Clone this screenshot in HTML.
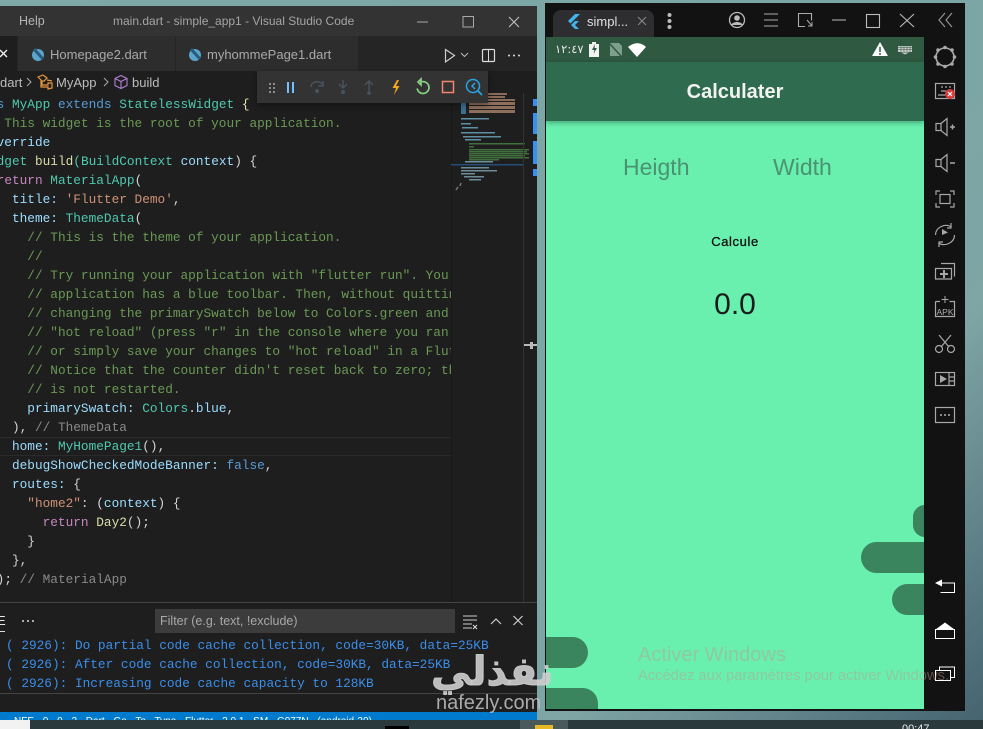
<!DOCTYPE html>
<html><head><meta charset="utf-8"><style>
html,body{margin:0;padding:0;width:983px;height:729px;overflow:hidden;background:#2a3a3c}
*{box-sizing:border-box}
.a{position:absolute}
#root{position:absolute;left:0;top:0;width:983px;height:729px;overflow:hidden;contain:paint}
#bg{left:0;top:0;width:983px;height:729px;background:linear-gradient(135deg,#7fa8a8 0%,#7ba6a5 55%,#7fa5a5 75%,#44626f 100%)}
.ui{font-family:"Liberation Sans",sans-serif;white-space:nowrap}
#code{left:-34px;top:95px;width:485px;font:12.78px/19px "Liberation Mono",monospace;white-space:pre;color:#d4d4d4}
#clip{left:0;top:0;width:451px;height:603px;overflow:hidden}
.k{color:#569cd6}.t{color:#4ec9b0}.c{color:#6a9955}.v{color:#9cdcfe}.f{color:#dcdcaa}.s{color:#ce9178}.p{color:#c586c0}.y{color:#e8e2b0}.o{color:#d4d4d4}.b{color:#4ec9b0}
.log{left:6px;font:12.78px/19px "Liberation Mono",monospace;color:#3b8eea;white-space:pre}
svg{position:absolute;overflow:visible}
</style></head><body><div id="root">
<div class="a" id="bg"></div>

<!-- VS Code window -->
<div class="a" style="left:0;top:6px;width:537px;height:706px;background:#1e1e1e"></div>
<div class="a" style="left:0;top:6px;width:537px;height:30px;background:#333"></div>
<div class="a ui" style="left:19px;top:14px;font-size:12.5px;color:#b5b5b5">Help</div>
<div class="a ui" style="left:113px;top:14px;font-size:12px;color:#a5a5a5">main.dart - simple_app1 - Visual Studio Code</div>
<svg style="left:0;top:0" width="537" height="36"><path d="M417 22h11" stroke="#aaa" stroke-width="1"/><rect x="463" y="16.500" width="10.500" height="10.500" fill="none" stroke="#aaa"/><path d="M509 17l10 10M519 17l-10 10" stroke="#bbb" stroke-width="1.200"/></svg>
<div class="a" style="left:0;top:36px;width:537px;height:35px;background:#252526"></div>
<div class="a" style="left:0;top:36px;width:17px;height:35px;background:#1e1e1e"></div>
<div class="a" style="left:18px;top:36px;width:157px;height:35px;background:#2d2d2d"></div>
<div class="a" style="left:176px;top:36px;width:182px;height:35px;background:#2d2d2d"></div>
<svg style="left:0;top:36px" width="400" height="35"><path d="M0 14l7 7M7 14l-7 7" stroke="#eee" stroke-width="1.400"/>
<circle cx="38" cy="19" r="6" fill="#5aa5cc"/><path d="M34 13l9 10" stroke="#2a5a7a" stroke-width="3"/>
<circle cx="195" cy="19" r="6" fill="#5aa5cc"/><path d="M191 13l9 10" stroke="#2a5a7a" stroke-width="3"/></svg>
<div class="a ui" style="left:50px;top:47px;font-size:13px;color:#a9a9a9">Homepage2.dart</div>
<div class="a ui" style="left:207px;top:47px;font-size:13px;color:#a9a9a9">myhommePage1.dart</div>
<svg style="left:430px;top:40px" width="100" height="28"><path d="M15.500 9.500l9 6-9 6.500z" fill="none" stroke="#ccc" stroke-width="1.200"/><path d="M31 13l3.500 3.500 3.500-3.500" fill="none" stroke="#bbb"/><rect x="52.500" y="9.500" width="12" height="12" rx="1" fill="none" stroke="#ddd" stroke-width="1.200"/><path d="M58.500 9.500v12" stroke="#ddd"/><circle cx="79" cy="15.500" r="1" fill="#ddd"/><circle cx="84" cy="15.500" r="1" fill="#ddd"/><circle cx="89" cy="15.500" r="1" fill="#ddd"/></svg>

<!-- breadcrumb -->
<div class="a ui" style="left:0;top:75px;font-size:13px;color:#bdbdbd">dart</div>
<svg style="left:0;top:71px" width="200" height="22"><path d="M27 7l4 4-4 4" fill="none" stroke="#aaa"/><path d="M38 6l5-2 4 3-3 3-2 0 0 4 6 0 0-2 4 0 0 5-4 1 0-2-7 0 0-7-3-3zM47 9l5 1" fill="none" stroke="#e8973d" stroke-width="1.200"/><path d="M104 7l4 4-4 4" fill="none" stroke="#aaa"/><path d="M121 4.500l6 3v7l-6 3-6-3v-7zM115 7.500l6 3 6-3M121 10.500v7" fill="none" stroke="#b180d7" stroke-width="1.100"/></svg>
<div class="a ui" style="left:56px;top:75px;font-size:13px;color:#bdbdbd">MyApp</div>
<div class="a ui" style="left:132px;top:75px;font-size:13px;color:#bdbdbd">build</div>

<!-- code -->
<div class="a" id="clip"><div class="a" style="left:0;top:437px;width:451px;height:19px;border-top:1px solid #2a2a2a;border-bottom:1px solid #2a2a2a"></div>
<div class="a" id="code"><span class="k">class</span> <span class="t">MyApp</span> <span class="k">extends</span> <span class="t">StatelessWidget</span> <span class="y">{</span>
  <span class="c">// This widget is the root of your application.</span>
  <span class="v">@override</span>
  <span class="t">Widget</span> <span class="f">build</span><span class="b">(</span><span class="t">BuildContext</span> <span class="v">context</span><span class="o">)</span> <span class="o">{</span>
    <span class="p">return</span> <span class="t">MaterialApp</span><span class="o">(</span>
      <span class="v">title:</span> <span class="s">'Flutter Demo'</span>,
      <span class="v">theme:</span> <span class="t">ThemeData</span><span class="o">(</span>
        <span class="c">// This is the theme of your application.</span>
        <span class="c">//</span>
        <span class="c">// Try running your application with "flutter run". You'll see the</span>
        <span class="c">// application has a blue toolbar. Then, without quitting the app, try</span>
        <span class="c">// changing the primarySwatch below to Colors.green and then invoke</span>
        <span class="c">// "hot reload" (press "r" in the console where you ran "flutter run",</span>
        <span class="c">// or simply save your changes to "hot reload" in a Flutter IDE).</span>
        <span class="c">// Notice that the counter didn't reset back to zero; the application</span>
        <span class="c">// is not restarted.</span>
        <span class="v">primarySwatch:</span> <span class="t">Colors</span>.<span class="v">blue</span>,
      <span class="o">)</span>, <span style="color:#8a8a8a">// ThemeData</span>
      <span class="v">home:</span> <span class="t">MyHomePage1</span><span class="o">()</span>,
      <span class="v">debugShowCheckedModeBanner:</span> <span class="k">false</span>,
      <span class="v">routes:</span> <span class="o">{</span>
        <span class="s">"home2"</span>: <span class="o">(</span><span class="v">context</span><span class="o">)</span> <span class="o">{</span>
          <span class="p">return</span> <span class="f">Day2</span><span class="o">()</span>;
        <span class="o">}</span>
      <span class="o">}</span>,
    <span class="o">)</span>; <span style="color:#8a8a8a">// MaterialApp</span></div></div>

<!-- minimap -->
<div class="a" style="left:451px;top:93px;width:1px;height:510px;background:#181818"></div>
<svg style="left:451px;top:93px" width="86" height="510">
<g fill="#8a6a58"><rect x="16" y="0" width="40" height="2"/><rect x="20" y="3" width="34" height="2"/><rect x="17" y="6" width="47" height="2"/></g>
<rect x="10" y="9" width="5" height="12" fill="#3b6f92"/>
<g fill="#8f6f5c"><rect x="18" y="9" width="46" height="3"/><rect x="18" y="13" width="46" height="3"/><rect x="18" y="17" width="46" height="3"/></g>
<g fill="#5e8fa3"><rect x="10" y="25" width="28" height="1.500"/><rect x="10" y="30" width="10" height="1.500"/><rect x="11" y="34" width="16" height="1.500"/><rect x="10" y="39" width="34" height="1.500"/><rect x="12" y="43" width="38" height="1.500"/><rect x="14" y="46" width="16" height="1.500"/></g>
<g fill="#41703f"><rect x="18" y="50" width="56" height="1.500"/><rect x="18" y="53" width="5" height="1.500"/><rect x="18" y="56" width="60" height="1.500"/><rect x="18" y="58" width="58" height="1.500"/><rect x="18" y="60" width="60" height="1.500"/><rect x="18" y="62" width="56" height="1.500"/><rect x="18" y="64" width="60" height="1.500"/><rect x="18" y="66" width="30" height="1.500"/></g>
<rect x="0" y="71" width="72" height="1.500" fill="#264f78"/>
<g fill="#6d8d9b"><rect x="14" y="68" width="28" height="1.500"/><rect x="10" y="74" width="28" height="1.500"/><rect x="10" y="77" width="36" height="1.500"/><rect x="10" y="80" width="14" height="1.500"/><rect x="13" y="83" width="20" height="1.500"/><rect x="18" y="86" width="12" height="1.500"/></g>
<path d="M10 90l-1 3M7 94l-2 3" stroke="#777" stroke-width="1.500"/>
<path d="M72.500 0v510" stroke="#333"/>
<g fill="#3a8ff5"><rect x="82" y="6" width="4" height="7"/><rect x="82" y="20" width="4" height="21"/><rect x="82" y="48" width="4" height="23"/><rect x="82" y="76" width="4" height="7"/></g>
<rect x="73" y="251" width="13" height="2" fill="#bbb"/><rect x="79" y="249" width="3" height="7" fill="#bbb"/>
</svg>

<!-- debug toolbar -->
<div class="a" style="left:257px;top:71px;width:231px;height:32px;background:#333;box-shadow:0 2px 6px rgba(0,0,0,.4)"></div>
<svg style="left:257px;top:71px" width="231" height="32">
<g fill="#8a8a8a"><rect x="12" y="12" width="2" height="2"/><rect x="16" y="12" width="2" height="2"/><rect x="12" y="16" width="2" height="2"/><rect x="16" y="16" width="2" height="2"/><rect x="12" y="20" width="2" height="2"/><rect x="16" y="20" width="2" height="2"/></g>
<path d="M31 11v11M36 11v11" stroke="#75beff" stroke-width="2"/>
<g fill="none" stroke="#48535e" stroke-width="1.500"><path d="M54 16c0-6 9-7 12-2M66 10v5h-5"/><path d="M86 9v8M82 13l4 4 4-4"/><path d="M112 20v-10M108 14l4-4 4 4"/></g>
<g fill="#48535e"><circle cx="60" cy="20" r="2"/><circle cx="86" cy="21" r="2"/><circle cx="112" cy="22" r="1.800"/></g>
<path d="M140 9l-4.500 8h3.500l-2 7 5.500-9h-3.500l3-6z" fill="#f5a623"/>
<path d="M161 11l3-3v6zM163 11c5-1.500 9 1.500 9 5.500 0 3.500-3 6-6 6s-5-2-6-5" fill="none" stroke="#89d185" stroke-width="1.700"/>
<rect x="185.500" y="10.500" width="11" height="11" fill="none" stroke="#f48771" stroke-width="1.500"/>
<circle cx="216" cy="15" r="6.500" fill="none" stroke="#27a5e6" stroke-width="1.500"/><path d="M221 20l4 4" stroke="#27a5e6" stroke-width="1.800"/><path d="M218 12l-3 3 3 3" fill="none" stroke="#27a5e6" stroke-width="1.500"/>
</svg>

<!-- panel -->
<div class="a" style="left:0;top:602px;width:537px;height:1px;background:#444"></div>
<div class="a" style="left:0;top:631px;width:5px;height:1px;background:#ddd"></div>
<div class="a ui" style="left:-3px;top:613px;font-size:13px;color:#e7e7e7">E</div>
<svg style="left:0;top:600px" width="537" height="36"><circle cx="23" cy="21" r="1" fill="#ddd"/><circle cx="28" cy="21" r="1" fill="#ddd"/><circle cx="33" cy="21" r="1" fill="#ddd"/><path d="M463 16h14M463 20h14M463 24h9M463 28h9" stroke="#ccc"/><path d="M473 25l4 4M477 25l-4 4" stroke="#ddd"/><path d="M491 24l5-5 5 5" fill="none" stroke="#ccc" stroke-width="1.200"/><path d="M513.500 16l9 9M522.500 16l-9 9" stroke="#ccc" stroke-width="1.200"/></svg>
<div class="a" style="left:155px;top:609px;width:300px;height:24px;background:#3c3c3c"></div>
<div class="a ui" style="left:160px;top:614px;font-size:12.5px;color:#a8a8a8">Filter (e.g. text, !exclude)</div>
<div class="a log" style="top:636px">( 2926): Do partial code cache collection, code=30KB, data=25KB</div>
<div class="a log" style="top:655px">( 2926): After code cache collection, code=30KB, data=25KB</div>
<div class="a log" style="top:674px">( 2926): Increasing code cache capacity to 128KB</div>
<div class="a" style="left:0;top:693px;width:537px;height:1px;background:#444"></div>
<div class="a" style="left:0;top:712px;width:537px;height:8px;background:#007acc;overflow:hidden"><div class="a ui" style="left:14px;top:4px;font-size:10px;color:#fff;word-spacing:6px">NFE 0 0 2 Dart Go To Type Flutter 2.0.1 SM G977N (android-30)</div></div>

<!-- Emulator -->
<div class="a" style="left:545px;top:3px;width:420px;height:708px;background:#121212"></div>
<div class="a" style="left:553px;top:10px;width:101px;height:27px;background:#2e2e30;border-radius:8px 8px 0 0"></div>
<svg style="left:545px;top:0" width="420" height="37">
<path d="M30 14l-7 7 2.500 2.500 9.500-9.500zM30 21l-4 4 4 4h4l-4-4 4-4z" fill="#41b4ee"/>
<path d="M93 17l8 8M101 17l-8 8" stroke="#8a8a8a"/>
<circle cx="124.500" cy="15" r="2" fill="#bbb"/><circle cx="124.500" cy="21" r="2" fill="#bbb"/><circle cx="124.500" cy="27" r="2" fill="#bbb"/>
<circle cx="192" cy="20" r="7.500" fill="none" stroke="#bbb" stroke-width="1.300"/><circle cx="192" cy="18" r="2.800" fill="#bbb"/><path d="M186 25c2-4 10-4 12 0z" fill="#bbb"/>
<path d="M219 14h14M219 20h14M219 26h14" stroke="#aaa"/>
<path d="M260 26.500h-6.500v-13h13v7" fill="none" stroke="#aaa" stroke-width="1.100"/><path d="M262 20l5 6M267 22v4h-4" fill="none" stroke="#aaa"/>
<path d="M287 20h14" stroke="#bbb"/><rect x="321.500" y="14.500" width="13" height="13" fill="none" stroke="#bbb" stroke-width="1.100"/><path d="M355 14l14 13M369 14l-14 13" stroke="#bbb" stroke-width="1.100"/>
<path d="M400 13l-6 7 6 7M407 13l-6 7 6 7" fill="none" stroke="#999" stroke-width="1.100"/>
</svg>
<div class="a ui" style="left:587px;top:14px;font-size:13px;color:#e0e0e0">simpl...</div>

<!-- phone -->
<div class="a" style="left:546px;top:37px;width:378px;height:672px;background:#69f0ae;overflow:hidden">
  <div class="a" style="left:0;top:0;width:378px;height:25px;background:#2f5940"></div>
  <div class="a" style="left:0;top:25px;width:378px;height:59px;background:#2f6b4e;box-shadow:0 2px 5px rgba(0,0,0,.3)"></div>
  <div class="a" style="left:367px;top:468px;width:30px;height:32px;border-radius:12px;background:#3a845e"></div>
  <div class="a" style="left:315px;top:505px;width:90px;height:31px;border-radius:15.500px;background:#3a845e"></div>
  <div class="a" style="left:346px;top:547px;width:60px;height:31px;border-radius:15.500px;background:#3a845e"></div>
  <div class="a" style="left:-30px;top:600px;width:72px;height:31px;border-radius:15.500px;background:#3a845e"></div>
  <div class="a" style="left:-30px;top:651px;width:82px;height:40px;border-radius:15.500px;background:#3a845e"></div>
</div>
<div class="a ui" style="left:555px;top:42px;font-family:'DejaVu Sans',sans-serif;font-size:11.500px;color:#e8e8e8">١٢:٤٧</div>
<svg style="left:545px;top:37px" width="380" height="25">
<path d="M44 7h3v-2h4v2h3v13h-10z" fill="#f2f2f2"/><path d="M50 7l-3 6h2.500l-1 4 3.500-6h-2.500z" fill="#2f5940"/>
<path d="M65 6h9l3 3v10h-12z" fill="#7f9f8d"/><path d="M64 6l13 14" stroke="#2f5940" stroke-width="1.500"/>
<path d="M83 10c6-5 13-5 18 0l-9 10z" fill="#fff"/>
<path d="M335 5l8 14h-16z" fill="#fff"/><path d="M335 10v5M335 16v2" stroke="#2f5940" stroke-width="1.500"/>
<rect x="353" y="9" width="14" height="6" fill="#ccc"/><path d="M353 10.500h14M353 12.500h14M356 9v6M359 9v6M362 9v6M365 9v6" stroke="#2f5940" stroke-width=".5"/><path d="M356 15.500h8l-4 2z" fill="#ccc"/>
</svg>
<div class="a ui" style="left:546px;top:81px;width:378px;text-align:center;font-size:20px;font-weight:bold;color:#f2f2f2">Calculater</div>
<div class="a ui" style="left:623px;top:154px;font-size:23px;color:#4a9271">Heigth</div>
<div class="a ui" style="left:773px;top:154px;font-size:23px;color:#4a9271">Width</div>
<div class="a ui" style="left:546px;top:234px;width:378px;text-align:center;font-size:13px;color:#111;letter-spacing:.6px;-webkit-text-stroke:.3px #111">Calcule</div>
<div class="a ui" style="left:546px;top:288px;width:378px;text-align:center;font-size:30px;color:#1b1b1b">0.0</div>

<!-- sidebar -->
<svg style="left:925px;top:35px" width="40" height="680">
<g fill="none" stroke="#a8a8a8" stroke-width="1.200">
<circle cx="20" cy="22" r="9" stroke-width="1.600"/>
<rect x="10.500" y="48.500" width="19" height="15"/><path d="M13 60h10M16 52h2M20 52h2M24 52h2M16 56h8"/>
<path d="M11 88.500v7h5l6 5v-17l-6 5zM16 88.500v7"/><path d="M25 92h5M27.500 89.500v5" stroke-width="1.500"/>
<path d="M11 124.500v7h5l6 5v-17l-6 5zM16 124.500v7"/><path d="M25 128h5" stroke-width="1.500"/>
<path d="M11 160v-4h4M25 156h4v4M29 168v4h-4M15 172h-4v-4"/><rect x="15" y="159.500" width="10" height="9"/>
<path d="M10.500 200c0-8 10-12 16-8M29.500 200c0 8-10 12-16 8M26 188v5h-4M14 212v-5h4"/>
<path d="M16 228.500h13.500v13M10.500 233.500h16v10.500h-16z"/>
<path d="M10.500 266.500v15h19v-15h-5M15 266.500h-4.500"/>
<path d="M14 300l10 12M26 300l-10 12"/><circle cx="14" cy="314" r="3.500"/><circle cx="26" cy="314" r="3.500"/>
<rect x="10.500" y="337.500" width="19" height="13"/><path d="M24 337.500v13M24 342h5.500M24 346h5.500"/>
<rect x="10.500" y="372.500" width="19" height="15"/>
</g>
<path d="M17 200v-6l6 3.500z" fill="#a8a8a8"/>
<path d="M18 235h2v3h3v2h-3v3h-2v-3h-3v-2h3z" fill="#a8a8a8"/>
<path d="M20 261v7M16.500 264.500h7" stroke="#a8a8a8"/>
<text x="20" y="280" font-family="Liberation Sans,sans-serif" font-size="8.500" fill="#b0b0b0" text-anchor="middle">APK</text>
<path d="M15 340v8l7-4z" fill="#a8a8a8"/>
<circle cx="16" cy="380" r="1" fill="#b0b0b0"/><circle cx="20" cy="380" r="1" fill="#b0b0b0"/><circle cx="24" cy="380" r="1" fill="#b0b0b0"/>
<circle cx="25" cy="59" r="5" fill="#d93a3a"/><path d="M23 57l4 4M27 57l-4 4" stroke="#fff" stroke-width="1.200"/>
<g fill="#a8a8a8"><circle cx="20" cy="12.500" r="1.800"/><circle cx="20" cy="31.500" r="1.800"/><circle cx="10.500" cy="22" r="1.800"/><circle cx="29.500" cy="22" r="1.800"/><circle cx="13" cy="15" r="1.800"/><circle cx="27" cy="15" r="1.800"/><circle cx="13" cy="29" r="1.800"/><circle cx="27" cy="29" r="1.800"/></g>
<path d="M17 544.500l-7 3.500 7 3.500z" fill="#fff"/>
<path d="M17 548h12.500v9.500h-14" fill="none" stroke="#fff"/>
<path d="M10.500 594.500l9.500-7 9.500 7z" fill="#fff"/><rect x="10.500" y="594.500" width="19" height="9" fill="none" stroke="#fff"/>
<path d="M10.500 635.500h15v10h-15zM14.500 635.500v-3.500h15v10.500h-4" fill="none" stroke="#fff"/>
</svg>

<!-- activation text -->
<div class="a ui" style="left:638px;top:644px;font-size:20px;color:rgba(190,150,150,.45)">Activer Windows</div>
<div class="a ui" style="left:638px;top:668px;font-size:14.700px;color:rgba(190,150,150,.45)">Accédez aux paramètres pour activer Windows.</div>

<!-- watermark -->
<div class="a" style="left:431px;top:642px;width:120px;text-align:center;font:bold 40px/60px 'DejaVu Sans',sans-serif;color:rgba(205,205,205,.9);-webkit-text-stroke:1px rgba(205,205,205,.9);white-space:nowrap">نفذلي</div>
<div class="a ui" style="left:436px;top:692px;font-size:20px;color:rgba(190,190,190,.88)">nafezly.com</div>

<!-- taskbar -->
<div class="a" style="left:0;top:720px;width:983px;height:9px;background:#2a3a3c"></div>
<div class="a" style="left:0;top:720px;width:30px;height:9px;background:#f2f2f2"></div>
<div class="a" style="left:520px;top:720px;width:48px;height:9px;background:#4a5a5a"></div>
<div class="a" style="left:535px;top:725px;width:18px;height:4px;background:#e8b923"></div>
<div class="a" style="left:385px;top:726px;width:24px;height:3px;background:#000"></div>
<div class="a ui" style="left:902px;top:723px;font-size:11px;color:#eee">00:47</div>
</div></body></html>
